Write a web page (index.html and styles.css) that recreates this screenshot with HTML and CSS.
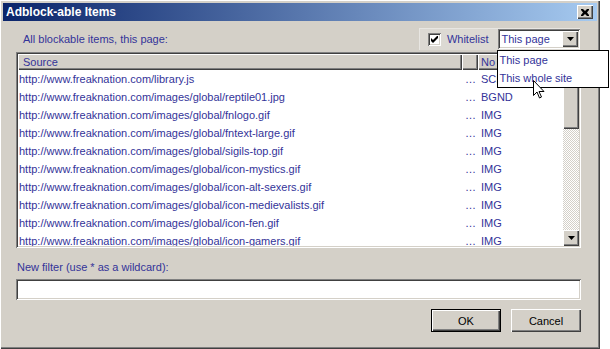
FILE: index.html
```html
<!DOCTYPE html>
<html>
<head>
<title>Adblock-able Items</title>
<link rel="stylesheet" href="styles.css">
</head>
<body>
<div class="window">
  <div class="titlebar">
    <span class="title">Adblock-able Items</span>
    <span class="close-btn">
      <svg width="8" height="7" viewBox="0 0 8 7"><path d="M0 0h2l2 2 2-2h2v1l-2 2.5 2 2.5v1h-2l-2-2-2 2h-2v-1l2-2.5-2-2.5z" fill="#000"/></svg>
    </span>
  </div>

  <div class="content">
    <div class="top-row">
      <span class="label intro">All blockable items, this page:</span>
      <div class="whitelist">
        <span class="checkbox">
          <svg width="7" height="7" viewBox="0 0 7 7"><path d="M0 2v3l2 2 5-5v-3l-5 5z" fill="#000"/></svg>
        </span>
        <span class="label">Whitelist</span>
        <div class="select">
          <span class="select-text">This page</span>
          <span class="select-btn">
            <svg width="7" height="4" viewBox="0 0 7 4"><path d="M0 0h7l-3.5 4z" fill="#000"/></svg>
          </span>
          <div class="dropdown">
            <div class="dropdown-item">This page</div>
            <div class="dropdown-item">This whole site</div>
          </div>
        </div>
      </div>
    </div>

    <div class="listview">
      <div class="list-main">
        <div class="list-header">
          <span class="hcell col-src">Source</span>
          <span class="hcell col-mid"></span>
          <span class="hcell col-type">No</span>
        </div>
        <div class="row"><span class="col-src">http://www.freaknation.com/library.js</span><span class="col-mid">…</span><span class="col-type">SCR</span></div>
        <div class="row"><span class="col-src">http://www.freaknation.com/images/global/reptile01.jpg</span><span class="col-mid">…</span><span class="col-type">BGND</span></div>
        <div class="row"><span class="col-src">http://www.freaknation.com/images/global/fnlogo.gif</span><span class="col-mid">…</span><span class="col-type">IMG</span></div>
        <div class="row"><span class="col-src">http://www.freaknation.com/images/global/fntext-large.gif</span><span class="col-mid">…</span><span class="col-type">IMG</span></div>
        <div class="row"><span class="col-src">http://www.freaknation.com/images/global/sigils-top.gif</span><span class="col-mid">…</span><span class="col-type">IMG</span></div>
        <div class="row"><span class="col-src">http://www.freaknation.com/images/global/icon-mystics.gif</span><span class="col-mid">…</span><span class="col-type">IMG</span></div>
        <div class="row"><span class="col-src">http://www.freaknation.com/images/global/icon-alt-sexers.gif</span><span class="col-mid">…</span><span class="col-type">IMG</span></div>
        <div class="row"><span class="col-src">http://www.freaknation.com/images/global/icon-medievalists.gif</span><span class="col-mid">…</span><span class="col-type">IMG</span></div>
        <div class="row"><span class="col-src">http://www.freaknation.com/images/global/icon-fen.gif</span><span class="col-mid">…</span><span class="col-type">IMG</span></div>
        <div class="row"><span class="col-src">http://www.freaknation.com/images/global/icon-gamers.gif</span><span class="col-mid">…</span><span class="col-type">IMG</span></div>
      </div>
      <div class="scrollbar">
        <span class="sb-btn"><svg width="7" height="4" viewBox="0 0 7 4"><path d="M0 4h7l-3.5-4z" fill="#000"/></svg></span>
        <span class="sb-thumb"></span>
        <span class="sb-track"></span>
        <span class="sb-btn"><svg width="7" height="4" viewBox="0 0 7 4"><path d="M0 0h7l-3.5 4z" fill="#000"/></svg></span>
      </div>
    </div>

    <div class="label filter-label">New filter (use * as a wildcard):</div>
    <div class="filter-input"></div>

    <div class="buttons">
      <span class="btn default"><span class="btn-face">OK</span></span>
      <span class="btn"><span class="btn-face">Cancel</span></span>
    </div>
  </div>
</div>

<svg class="cursor" width="12" height="20" viewBox="0 0 12 20">
  <path d="M0.5 0.5v15l3.5-3.5 2.5 6 2-1-2.5-5.5h5z" fill="#fff" stroke="#000" stroke-width="1"/>
</svg>
</body>
</html>
```

FILE: styles.css
```css
body {
  margin: 0;
  background-color: #FFF;
  font-family: "Liberation Sans", Arial, sans-serif;
  font-size: 11px;
  position: relative;
}

.window {
  position: relative;
  width: 600px;
  height: 349px;
  box-sizing: border-box;
  padding: 3px;
  background-color: #D4D0C8;
  box-shadow: inset 1px 1px #FFF, inset -1px -1px #404040, inset -2px -2px #808080;
}

/* barra de titulo */
.titlebar {
  height: 18px;
  display: flex;
  align-items: center;
  justify-content: space-between;
  padding: 0 4px 0 3px;
  background: linear-gradient(to right, #0A246A, #A6CAF0);
}

.title {
  color: #FFF;
  font-weight: bold;
  font-size: 12px;
}

.close-btn {
  width: 16px;
  height: 14px;
  display: flex;
  align-items: center;
  justify-content: center;
  background-color: #D4D0C8;
  box-shadow: inset 1px 1px #FFF, inset -1px -1px #404040, inset -2px -2px #808080;
}

.content {
  padding: 7px 16px 0 13px;
}

.label {
  color: #333399;
}

.top-row {
  height: 22px;
  display: flex;
  align-items: center;
  justify-content: space-between;
}

.intro {
  padding-left: 7px;
}

.whitelist {
  position: relative;
  width: 161px;
  height: 22px;
  box-sizing: border-box;
  margin-right: 1px;
  display: flex;
  align-items: center;
  padding-left: 9px;
  background-color: #DCD9D3;
  box-shadow: inset 1px 1px #E8E6E2, inset -1px 0 #E8E6E2;
}

.checkbox {
  width: 13px;
  height: 13px;
  box-sizing: border-box;
  display: flex;
  align-items: center;
  justify-content: center;
  margin-right: 6px;
  background-color: #FFF;
  box-shadow: inset 1px 1px #808080, inset -1px -1px #FFF, inset 2px 2px #404040, inset -2px -2px #D4D0C8;
}

.select {
  position: relative;
  width: 82px;
  height: 20px;
  box-sizing: border-box;
  margin-left: 10px;
  padding: 2px;
  display: flex;
  align-items: center;
  background-color: #FFF;
  box-shadow: inset 1px 1px #808080, inset -1px -1px #FFF, inset 2px 2px #404040, inset -2px -2px #D4D0C8;
}

.select-text {
  flex: 1;
  color: #333399;
  padding-left: 1px;
}

.select-btn {
  width: 16px;
  height: 16px;
  display: flex;
  align-items: center;
  justify-content: center;
  background-color: #D4D0C8;
  box-shadow: inset 1px 1px #FFF, inset -1px -1px #404040, inset -2px -2px #808080;
}

.dropdown {
  position: absolute;
  left: -1px;
  top: 21px;
  width: 112px;
  box-sizing: border-box;
  border: 1px solid #000;
  background-color: #FFF;
  z-index: 2;
}

.dropdown-item {
  height: 18px;
  line-height: 18px;
  padding-left: 1px;
  color: #333399;
}

/* lista */
.listview {
  margin-top: 2px;
  width: 565px;
  height: 196px;
  box-sizing: border-box;
  padding: 2px;
  display: flex;
  background-color: #FFF;
  box-shadow: inset 1px 1px #808080, inset -1px -1px #FFF, inset 2px 2px #404040, inset -2px -2px #D4D0C8;
}

.list-main {
  flex: 1;
  overflow: hidden;
}

.list-header {
  display: flex;
  height: 16px;
}

.hcell {
  height: 16px;
  line-height: 16px;
  box-sizing: border-box;
  color: #333399;
  background-color: #D4D0C8;
  box-shadow: inset 1px 1px #FFF, inset -1px -1px #404040, inset -2px -2px #808080;
}

.col-src {
  width: 444px;
  padding-left: 5px;
  box-sizing: border-box;
  white-space: nowrap;
  overflow: hidden;
}

.col-mid {
  width: 16px;
  box-sizing: border-box;
  padding-left: 3px;
}

.col-type {
  flex: 1;
  padding-left: 3px;
}

.row {
  display: flex;
  height: 18px;
  line-height: 18px;
  color: #333399;
}

.row .col-src {
  padding-left: 1px;
}

.scrollbar {
  width: 16px;
  display: flex;
  flex-direction: column;
}

.sb-btn {
  height: 16px;
  display: flex;
  align-items: center;
  justify-content: center;
  background-color: #D4D0C8;
  box-shadow: inset 1px 1px #FFF, inset -1px -1px #404040, inset -2px -2px #808080;
}

.sb-thumb {
  height: 59px;
  background-color: #D4D0C8;
  box-shadow: inset 1px 1px #FFF, inset -1px -1px #404040, inset -2px -2px #808080;
}

.sb-track {
  flex: 1;
  background: repeating-conic-gradient(#FFF 0 25%, #D4D0C8 0 50%) 0 0 / 2px 2px;
}

/* filtro */
.filter-label {
  margin-top: 12px;
  padding-left: 1px;
  line-height: 14px;
}

.filter-input {
  margin-top: 5px;
  width: 565px;
  height: 21px;
  background-color: #FFF;
  box-shadow: inset 1px 1px #808080, inset -1px -1px #FFF, inset 2px 2px #404040, inset -2px -2px #D4D0C8;
}

.buttons {
  margin-top: 9px;
  display: flex;
  justify-content: flex-end;
  gap: 10px;
  width: 565px;
}

.btn {
  width: 70px;
  height: 23px;
  box-sizing: border-box;
  display: flex;
  background-color: #D4D0C8;
  box-shadow: inset 1px 1px #FFF, inset -1px -1px #404040, inset -2px -2px #808080;
}

.btn.default {
  border: 1px solid #000;
  box-shadow: none;
}

.btn-face {
  flex: 1;
  display: flex;
  align-items: center;
  justify-content: center;
  color: #000;
}

.btn.default .btn-face {
  box-shadow: inset 1px 1px #FFF, inset -1px -1px #404040, inset -2px -2px #808080;
}

.cursor {
  position: absolute;
  left: 533px;
  top: 80px;
  z-index: 3;
}
```
